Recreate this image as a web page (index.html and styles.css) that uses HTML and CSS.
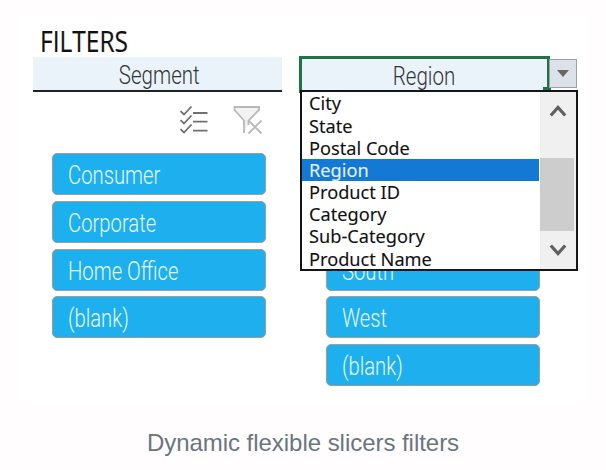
FILE: index.html
```html
<!DOCTYPE html>
<html lang="en">
<head>
<meta charset="utf-8">
<title>Dynamic flexible slicers filters</title>
<link rel="stylesheet" href="styles.css">
</head>
<body>
<figure class="figure">
  <div class="sheet">
    <h1 class="title"><span class="title-text">FILTERS</span></h1>
    <div class="columns">
      <section class="column">
        <div class="field"><span class="field-text">Segment</span></div>
        <div class="tools">
          <svg class="tool" width="30" height="30" viewBox="0 0 30 30" fill="none" stroke="#707070" stroke-width="1.8">
            <path d="M1.5 6.2 5 9.5 12.5 1.5M1.5 15.2 5 18.5 12.5 10.5M1.5 24.2 5 27.5 12.5 19.5"/>
            <path d="M14 8h14.5M14 16.7h14.5M14 25.7h14.5"/>
          </svg>
          <svg class="tool" width="30" height="30" viewBox="0 0 30 30" fill="none" stroke="#b8b8b8" stroke-width="1.8">
            <path fill="#f2f2f2" d="M11 28V15.5L1.5 5V2H26V5L15.5 15.5V20"/>
            <path d="M15.5 15.5 28.5 28.5M28.5 15.5 15.5 28.5"/>
          </svg>
        </div>
        <ul class="slicer">
          <li class="slice"><span class="slice-text">Consumer</span></li>
          <li class="slice"><span class="slice-text">Corporate</span></li>
          <li class="slice"><span class="slice-text">Home Office</span></li>
          <li class="slice"><span class="slice-text">(blank)</span></li>
        </ul>
      </section>
      <section class="column column-region">
        <div class="field field-active"><span class="field-text">Region</span></div>
        <ul class="slicer slicer-region">
          <li class="slice"><span class="slice-text">South</span></li>
          <li class="slice"><span class="slice-text">West</span></li>
          <li class="slice"><span class="slice-text">(blank)</span></li>
        </ul>
        <div class="handle"></div>
        <div class="toggle">
          <svg width="12" height="7" viewBox="0 0 12 7"><path fill="#666" d="M0 0h12L6 7z"/></svg>
        </div>
        <div class="menu">
          <ul class="options">
            <li class="option"><span class="option-text">City</span></li>
            <li class="option"><span class="option-text">State</span></li>
            <li class="option"><span class="option-text">Postal Code</span></li>
            <li class="option selected"><span class="option-text">Region</span></li>
            <li class="option"><span class="option-text">Product ID</span></li>
            <li class="option"><span class="option-text">Category</span></li>
            <li class="option"><span class="option-text">Sub-Category</span></li>
            <li class="option"><span class="option-text">Product Name</span></li>
          </ul>
          <div class="scrollbar">
            <svg class="arrow-up" width="18" height="14" viewBox="0 0 18 14"><path fill="none" stroke="#606060" stroke-width="3.2" d="M1.8 11.5 9 3.5 16.2 11.5"/></svg>
            <div class="thumb"></div>
            <svg class="arrow-down" width="18" height="14" viewBox="0 0 18 14"><path fill="none" stroke="#606060" stroke-width="3.2" d="M1.8 2.5 9 10.5 16.2 2.5"/></svg>
          </div>
        </div>
      </section>
    </div>
  </div>
  <figcaption class="caption">Dynamic flexible slicers filters</figcaption>
</figure>
</body>
</html>
```

FILE: styles.css
```css
* { box-sizing: border-box; }
body {
  margin: 0;
  height: 470px;
  overflow: hidden;
  background: #fffdfe;
  font-family: "Liberation Sans", sans-serif;
}
ul { list-style: none; margin: 0; padding: 0; }
.figure { margin: 0; padding-top: 14px; }
.sheet {
  width: 570px;
  height: 391px;
  margin-left: 18px;
  padding: 12px 0 0 15px;
  background: #fff;
}
.title { margin: 0; height: 31px; padding-left: 7px; font-weight: 400; line-height: 31px; }
.title-text {
  display: inline-block;
  font: 400 28.5px/31px "Open Sans", sans-serif;
  color: #111;
  -webkit-text-stroke: .2px #111;
  transform: scaleX(.86);
  transform-origin: 0 0;
}
.columns { display: flex; gap: 17px; }
.column { width: 249px; }
.column-region { position: relative; width: 251px; }
.field {
  height: 35px;
  display: flex;
  justify-content: center;
  background: #eaf3fa;
  border-bottom: 2px solid #222;
  padding-left: 3px;
}
.field-active { border: 3px solid #217346; height: 37px; margin-top: -1px; padding-left: 0; border-bottom-color: #222; }
.field-text {
  font: 300 25px/38px Roboto, sans-serif;
  color: #333;
  transform: scaleX(.82);
}
.field-active .field-text { line-height: 35px; }
.tools { display: flex; gap: 24px; padding: 13px 0 0 146px; height: 61px; }
.slicer { display: grid; gap: 5.8px; margin-left: 19px; width: 214px; }
.slicer-region { margin: 155.6px 0 0 27px; }
.slice {
  height: 42px;
  padding-left: 15px;
  border: 1.5px solid #a09c98;
  border-radius: 5px;
  background: #1eb0ee;
}
.slice-text {
  display: inline-block;
  font: 300 25px/43px Roboto, sans-serif;
  color: #e8f6fd;
  transform: scaleX(.81);
  transform-origin: 0 0;
}
.handle {
  position: absolute;
  left: 244px;
  top: 30px;
  width: 8px;
  height: 4px;
  background: #217346;
}
.toggle {
  position: absolute;
  left: 250px;
  top: 2px;
  width: 28px;
  height: 29px;
  display: grid;
  place-items: center;
  background: #dde1e8;
  border: 1px solid #9ca0a8;
}
.menu {
  position: absolute;
  left: 1px;
  top: 33px;
  width: 278px;
  height: 181px;
  display: flex;
  background: #fff;
  border: 2px solid #151515;
}
.options { flex: 1; }
.option { height: 22.1px; padding-left: 7px; overflow: hidden; }
.option:first-child { height: 23px; }
.option-text {
  display: inline-block;
  font: 400 18px/23px "Noto Sans", sans-serif;
  color: #111;
  -webkit-text-stroke: .1px;
  transform: scaleX(1.01);
  transform-origin: 0 0;
}
.selected { background: #1479d4; }
.selected .option-text { color: #e4f1fc; }
.scrollbar {
  width: 36px;
  margin-left: 1px;
  display: flex;
  flex-direction: column;
  align-items: center;
  background: #f0f0f0;
}
.arrow-up { margin-top: 12px; }
.thumb { width: 34px; height: 73px; margin: 40px 2px 0 0; background: #cdcdcd; }
.arrow-down { margin-top: 12px; }
.arrow-up, .arrow-down { flex: none; }
.caption {
  padding: 23px 0 0 0;
  text-align: center;
  font-size: 24px;
  line-height: 30px;
  letter-spacing: -.04px;
  color: #6b7580;
}
```
